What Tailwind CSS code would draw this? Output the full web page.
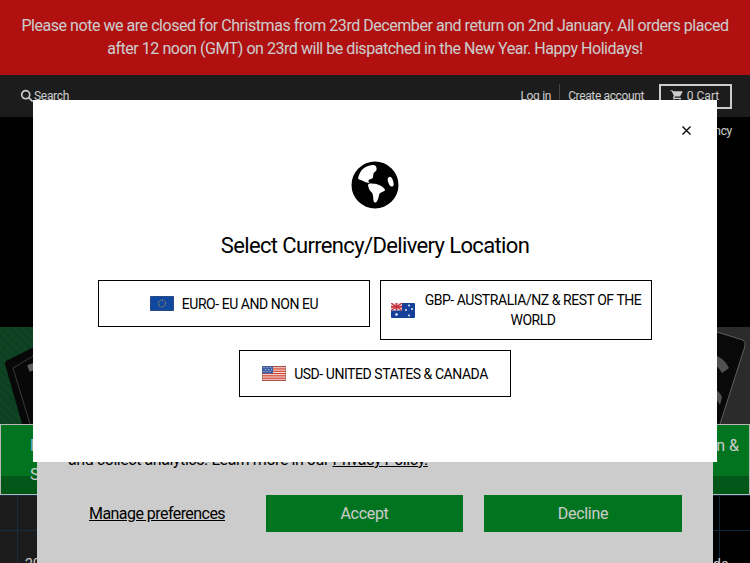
<!DOCTYPE html>
<html lang="en">
<head>
  <meta charset="UTF-8" />
  <meta name="viewport" content="width=device-width, initial-scale=1.0" />
  <title>Select Currency</title>
  <script src="https://cdn.jsdelivr.net/npm/@tailwindcss/browser@4"></script>
</head>
<body class="relative h-[563px] w-[750px] overflow-hidden bg-black font-['Roboto',sans-serif] text-white">

  <!-- page behind the modal -->
  <div class="flex h-[75px] items-center justify-center bg-[#dc1414] px-5 pb-[2px] text-center text-[16px] leading-[23px] tracking-[-0.46px] text-white">
    <p>Please note we are closed for Christmas from 23rd December and return on 2nd January. All orders placed after 12 noon (GMT) on 23rd will be dispatched in the New Year. Happy Holidays!</p>
  </div>

  <div class="flex h-[42px] items-center justify-between bg-[#232323] pl-5 pr-[18px] text-[12px] tracking-[-0.3px]">
    <div class="flex items-center">
      <svg class="h-[14px] w-[14px]" viewBox="0 0 14 14" fill="none" stroke="white" stroke-width="1.7"><circle cx="5.7" cy="5.7" r="4"/><path d="M8.7 8.7l4 4"/></svg>
      <span>Search</span>
    </div>
    <div class="flex items-center">
      <span class="border-r border-[#555] pr-2 leading-[24px]">Log in</span>
      <span class="pl-2 pr-[15px] tracking-[-0.37px]">Create account</span>
      <div class="flex h-[25px] w-[73px] items-center justify-center gap-[3px] border-2 border-white pr-[2px] tracking-normal">
        <svg class="h-[14px] w-[14px]" viewBox="0 0 24 24" fill="white"><path d="M7 18c-1.1 0-2 .9-2 2s.9 2 2 2 2-.9 2-2-.9-2-2-2zM1 2v2h2l3.6 7.6L5.2 14c-.7 1.3.3 3 1.8 3h12v-2H7.400l1.100-2h7.500c.7 0 1.400-.4 1.700-1L21.400 5c.4-.7-.1-1-.9-1H5.200l-.9-2H1zm16 16c-1.100 0-2 .9-2 2s.9 2 2 2 2-.9 2-2-.9-2-2-2z"/></svg>
        <span>0 Cart</span>
      </div>
    </div>
  </div>

  <div class="flex h-[210px] justify-end bg-black pr-[18px] pt-[5px] text-[12px] tracking-[-0.3px]">
    <span>Currency</span>
  </div>

  <!-- hero image, only the edges show round the modal -->
  <svg class="block h-[97px] w-[750px]" viewBox="0 0 750 97">
    <defs>
      <pattern id="weave" width="12" height="12" patternUnits="userSpaceOnUse" patternTransform="rotate(45)">
        <rect width="12" height="12" fill="#114f2a"/>
        <path d="M0 3h12M0 9h12M3 0v3M9 9v3" stroke="#16592f" stroke-width="1.500" fill="none"/>
      </pattern>
    </defs>
    <rect width="750" height="97" fill="url(#weave)"/>
    <path d="M6 34 L40 17 L40 97 L22 97 L5 37 Z" fill="#0b0b0b"/>
    <path d="M13 41 L40 25 M13 41 L30 97" stroke="#4a4a4a" stroke-width="1" fill="none"/>
    <rect x="28" y="37" width="6" height="7" fill="#777" transform="rotate(-20 31 40)"/>
    <rect x="700" width="50" height="97" fill="#363636"/>
    <path d="M700 0 L717 5 L743 13 Q746 15 745 19 L720 97 L700 97 Z" fill="#0c0c0c"/>
    <path d="M700 0 L717 5 L743 13 Q746 15 745 19 L720 97" stroke="#777" stroke-width="1" fill="none"/>
    <path d="M710 26 Q724 30 729 41 L722 46 Q718 38 708 34 Z" fill="#666"/>
    <path d="M710 60 Q720 64 722 70 L720 78 Q716 70 708 68 Z" fill="#666"/>
  </svg>

  <div class="relative h-[71px] border border-[#e5e5e5] bg-[#009126]">
    <div class="absolute bottom-0 left-0 h-[18px] w-full bg-[#006d1d]"></div>
    <p class="absolute left-[29px] top-[9px] text-[16px] text-[#bfe3ff]">F</p>
    <p class="absolute left-[29px] top-[38px] text-[16px]">S</p>
    <p class="absolute right-[10px] top-[9px] text-[16px]">n &amp;</p>
  </div>

  <div class="relative flex h-[68px] text-[14px]">
    <div class="w-[375px] bg-[#232323] bg-[linear-gradient(#1c3a52_1px,transparent_1px),linear-gradient(90deg,#1c3a52_1px,transparent_1px)] bg-[size:100%_35px,375px_100%] bg-[position:0_0,17px_0]"></div>
    <div class="w-[375px] bg-black bg-[linear-gradient(#14304a_1px,transparent_1px),linear-gradient(90deg,#14304a_1px,transparent_1px)] bg-[size:100%_35px,375px_100%] bg-[position:0_0,344px_0]"></div>
    <span class="absolute left-[25px] top-[59px]">20</span>
    <span class="absolute left-[713px] top-[59px]">de</span>
  </div>

  <!-- cookie banner -->
  <div class="absolute left-[37px] top-[424px] h-[139px] w-[676px] bg-white text-black">
    <p class="absolute left-[31px] top-[26px] text-[16px] leading-[20px] tracking-[-0.44px]">and collect analytics. Learn more in our <a class="underline" href="#">Privacy Policy.</a></p>
    <div class="absolute left-[52px] top-[71px] flex items-center text-[16px]">
      <a class="w-[177px] leading-[37px] tracking-[-0.55px] underline" href="#">Manage preferences</a>
      <button class="h-[37px] w-[197px] bg-[#009126] tracking-[-0.3px] text-white">Accept</button>
      <button class="ml-[21px] h-[37px] w-[198px] bg-[#009126] tracking-[-0.3px] text-white">Decline</button>
    </div>
  </div>

  <div class="absolute inset-0 bg-black/20"></div>

  <!-- currency modal -->
  <div class="absolute left-[33px] top-[100px] flex h-[362px] w-[684px] flex-col items-center bg-white text-black">
    <button class="absolute right-[25px] top-[25px] h-[11px] w-[11px]">
      <svg viewBox="0 0 11 11" fill="none" stroke="black" stroke-width="1.300"><path d="M1.500 1.500l8 8M9.500 1.500l-8 8"/></svg>
    </button>

    <svg class="mt-[61px] h-[48px] w-[48px]" viewBox="0 0 48 48">
      <circle cx="24" cy="24" r="23.500" fill="black"/>
      <path fill="white" d="M7 17.500C8 13 10 9 12.500 7.500 15 5.500 19 4 22.500 4c2.500 0 3.500 3 3 5-.5 1.500-2.500 2-3 3.500-.5 1.500 0 3.500-1 4.800-1 1-2.800.7-3.800 1.700-.8.800 0 1.800.8 2.800-2.500 0-5-1-7-2.100C9.500 18.800 8 18.500 7 17.500z"/>
      <path fill="white" d="M17 24c.5-1.500 2-1.800 3.500-1.500 2.500.3 5 .2 7.500 1.500 2.500 1 5 2.500 6 4.800.3 1.200-1.500 1.700-2.800 2.200-1.500.5-2.500 1-3 2.500-.6 2.500-1 5.500-2.800 7.500-.7.800-2 .800-2.600-.2-.8-2.500-.3-5.800-1.300-8-.8-1.800-2.500-2.800-3.300-4.500-.5-1.400-.9-2.900-1.200-4.300z"/>
      <ellipse cx="39.700" cy="20.700" rx="2.500" ry="5" fill="white" transform="rotate(-18 39.700 20.700)"/>
    </svg>

    <h2 class="mt-[24px] text-[22px] leading-[26px] tracking-[-0.64px]">Select Currency/Delivery Location</h2>

    <div class="mt-[21px] flex items-start gap-[10px] text-[14px] leading-[20px] tracking-[-0.45px]">
      <button class="flex h-[47px] w-[272px] items-center justify-center gap-[8px] border border-black">
        <svg class="h-[15px] w-[24px] shrink-0" viewBox="0 0 24 15"><rect width="24" height="15" rx="1" fill="#0f47a1"/><rect x=".25" y=".25" width="23.500" height="14.500" rx="1" fill="none" stroke="#555" stroke-width=".5"/><circle cx="12" cy="7.500" r="3.500" fill="none" stroke="#c9a23a" stroke-width="1" stroke-dasharray="1 .8"/></svg>
        <span>EURO- EU AND NON EU</span>
      </button>
      <button class="flex h-[60px] w-[272px] items-center border border-black pl-[10px]">
        <svg class="h-[15px] w-[24px] shrink-0" viewBox="0 0 24 15"><rect width="24" height="15" rx="1" fill="#16409a"/><rect width="11" height="7.500" fill="#e8dfe6"/><path d="M0 0l11 7.500M11 0L0 7.500" stroke="#c8323c" stroke-width="1.300"/><path d="M5.500 0v7.500M0 3.750h11" stroke="#c8323c" stroke-width="1.800"/><g fill="white"><circle cx="5.500" cy="11.500" r="1.200"/><circle cx="18" cy="2.500" r=".9"/><circle cx="18" cy="12.500" r=".9"/><circle cx="15" cy="7" r=".9"/><circle cx="21" cy="6" r=".9"/></g></svg>
        <span class="flex-1 text-center">GBP- AUSTRALIA/NZ &amp; REST OF THE WORLD</span>
      </button>
    </div>

    <button class="mt-[10px] flex h-[47px] w-[272px] items-center justify-center gap-[8px] border border-black text-[14px] leading-[20px] tracking-[-0.45px]">
      <svg class="h-[15px] w-[24px] shrink-0" viewBox="0 0 24 15"><rect width="24" height="15" rx="1" fill="#f4efee"/><g fill="#d5432f"><rect width="24" height="1.300" y="0"/><rect width="24" height="1.300" y="2.300"/><rect width="24" height="1.300" y="4.600"/><rect width="24" height="1.300" y="6.900"/><rect width="24" height="1.300" y="9.200"/><rect width="24" height="1.300" y="11.500"/><rect width="24" height="1.300" y="13.700"/></g><rect width="11" height="7.500" fill="#3f5fa8"/><g fill="#dfe6f5"><circle cx="2" cy="1.500" r=".5"/><circle cx="5" cy="1.500" r=".5"/><circle cx="8" cy="1.500" r=".5"/><circle cx="3.500" cy="3.500" r=".5"/><circle cx="6.500" cy="3.500" r=".5"/><circle cx="9.500" cy="3.500" r=".5"/><circle cx="2" cy="5.500" r=".5"/><circle cx="5" cy="5.500" r=".5"/><circle cx="8" cy="5.500" r=".5"/></g><rect x=".25" y=".25" width="23.500" height="14.500" rx="1" fill="none" stroke="#666" stroke-width=".5"/></svg>
      <span>USD- UNITED STATES &amp; CANADA</span>
    </button>
  </div>
</body>
</html>
